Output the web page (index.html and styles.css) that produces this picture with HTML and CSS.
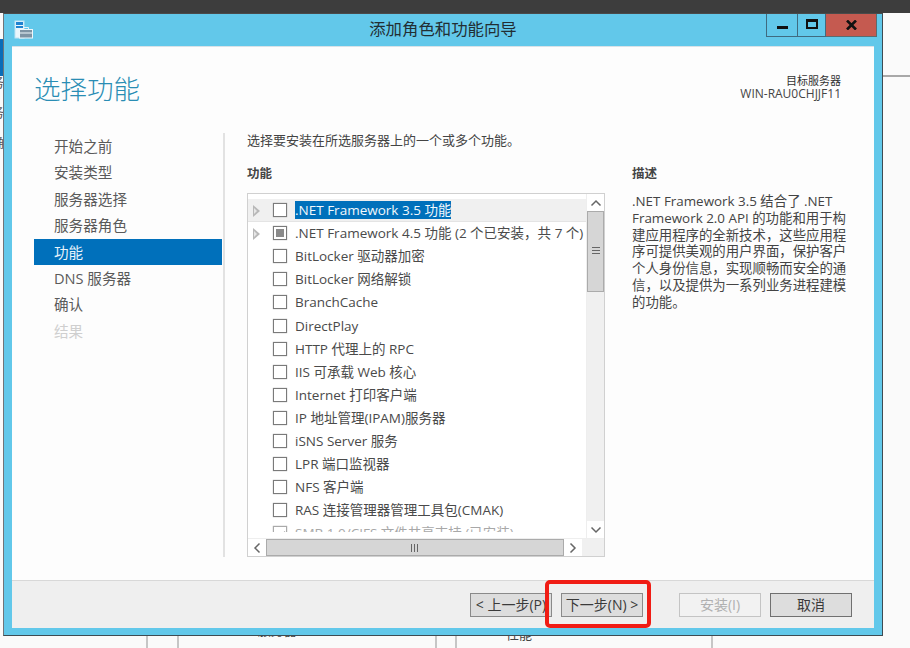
FILE: index.html
```html
<!DOCTYPE html>
<html lang="zh-CN">
<head>
<meta charset="utf-8">
<title>添加角色和功能向导</title>
<link rel="stylesheet" href="styles.css">
</head>
<body>
<div class="topbar"></div>
<div class="desktop">
  <div class="bg-left-block"></div>
  <div class="bg-left-text t1">务</div>
  <div class="bg-left-text t2">务</div>
  <div class="bg-left-text t3">确</div>
  <div class="bg-right-line"></div>
  <div class="bg-v v1"></div><div class="bg-v v2"></div><div class="bg-v v3"></div><div class="bg-v v4"></div><div class="bg-v v5"></div>
  <div class="bg-bottom-text b1">DNS 服务器</div>
  <div class="bg-bottom-text b2">性能</div>

  <section class="window">
    <header class="titlebar">
      <svg class="appicon" width="20" height="20" viewBox="0 0 20 20">
        <rect x="1" y="1" width="9" height="17" fill="#eaf6fc" stroke="#bfe3f3"/>
        <rect x="2" y="2" width="7" height="3" fill="#1f83d0"/>
        <rect x="2" y="6" width="7" height="2" fill="#1f83d0"/>
        <rect x="5.5" y="9.5" width="13" height="8.5" fill="#7d93a3" stroke="#eef7fb"/>
        <path d="M9.500 9.500V7.500H14.500V9.500" fill="none" stroke="#e8f3f8"/>
        <path d="M6 13H18" stroke="#eef7fb"/>
      </svg>
      <h1 class="wintitle">添加角色和功能向导</h1>
      <div class="controls">
        <div class="ctl ctl-min"><span class="glyph-min"></span></div>
        <div class="ctl ctl-max"><span class="glyph-max"></span></div>
        <div class="ctl ctl-close">
          <svg width="11" height="10" viewBox="0 0 11 10"><path d="M1 0.500L10 9.500M10 0.500L1 9.500" stroke="#111" stroke-width="2.600"/></svg>
        </div>
      </div>
    </header>
    <div class="client">
      <div class="pagehead">
        <h2 class="pagetitle">选择功能</h2>
        <div class="server">
          <div class="server-label">目标服务器</div>
          <div>WIN-RAU0CHJJF11</div>
        </div>
      </div>
      <div class="main">
        <nav class="nav">
          <div class="nav-item">开始之前</div>
          <div class="nav-item">安装类型</div>
          <div class="nav-item">服务器选择</div>
          <div class="nav-item">服务器角色</div>
          <div class="nav-item active">功能</div>
          <div class="nav-item">DNS 服务器</div>
          <div class="nav-item">确认</div>
          <div class="nav-item disabled">结果</div>
        </nav>
        <div class="content">
          <p class="intro">选择要安装在所选服务器上的一个或多个功能。</p>
          <div class="columns">
            <div class="features">
              <h3 class="colhead">功能</h3>
              <div class="listbox">
                <div class="listarea">
                  <div class="rows">
                    <div class="row first"><span class="arrow"></span><span class="check"></span><span class="label selected">.NET Framework 3.5 功能</span></div>
                    <div class="row"><span class="arrow"></span><span class="check partial"></span><span class="label">.NET Framework 4.5 功能 (2 个已安装，共 7 个)</span></div>
                    <div class="row"><span class="check"></span><span class="label">BitLocker 驱动器加密</span></div>
                    <div class="row"><span class="check"></span><span class="label">BitLocker 网络解锁</span></div>
                    <div class="row"><span class="check"></span><span class="label">BranchCache</span></div>
                    <div class="row"><span class="check"></span><span class="label">DirectPlay</span></div>
                    <div class="row"><span class="check"></span><span class="label">HTTP 代理上的 RPC</span></div>
                    <div class="row"><span class="check"></span><span class="label">IIS 可承载 Web 核心</span></div>
                    <div class="row"><span class="check"></span><span class="label">Internet 打印客户端</span></div>
                    <div class="row"><span class="check"></span><span class="label">IP 地址管理(IPAM)服务器</span></div>
                    <div class="row"><span class="check"></span><span class="label">iSNS Server 服务</span></div>
                    <div class="row"><span class="check"></span><span class="label">LPR 端口监视器</span></div>
                    <div class="row"><span class="check"></span><span class="label">NFS 客户端</span></div>
                    <div class="row"><span class="check"></span><span class="label">RAS 连接管理器管理工具包(CMAK)</span></div>
                    <div class="row faded"><span class="check checked"></span><span class="label">SMB 1.0/CIFS 文件共享支持 (已安装)</span></div>
                  </div>
                  <div class="vscroll">
                    <div class="sbtn"><svg width="12" height="8" viewBox="0 0 12 8"><path d="M1.500 6.500L6 2L10.500 6.500" fill="none" stroke="#666" stroke-width="1.500"/></svg></div>
                    <div class="vthumb"><span class="grip-h"></span></div>
                    <div class="vtrack"></div>
                    <div class="sbtn"><svg width="12" height="8" viewBox="0 0 12 8"><path d="M1.500 1.500L6 6L10.500 1.500" fill="none" stroke="#666" stroke-width="1.500"/></svg></div>
                  </div>
                </div>
                <div class="hscroll">
                  <div class="sbtn-h"><svg width="8" height="12" viewBox="0 0 8 12"><path d="M6.500 1.500L2 6L6.500 10.500" fill="none" stroke="#666" stroke-width="1.500"/></svg></div>
                  <div class="hthumb"><span class="grip-v"></span></div>
                  <div class="sbtn-h"><svg width="8" height="12" viewBox="0 0 8 12"><path d="M1.500 1.500L6 6L1.500 10.500" fill="none" stroke="#666" stroke-width="1.500"/></svg></div>
                  <div class="corner"></div>
                </div>
              </div>
            </div>
            <aside class="desc">
              <h3 class="colhead">描述</h3>
              <p class="desctext">.NET Framework 3.5 结合了 .NET Framework 2.0 API 的功能和用于构建应用程序的全新技术，这些应用程序可提供美观的用户界面，保护客户个人身份信息，实现顺畅而安全的通信，以及提供为一系列业务进程建模的功能。</p>
            </aside>
          </div>
        </div>
      </div>
      <footer class="footer">
        <button class="btn btn-prev">&lt; 上一步(P)</button>
        <button class="btn btn-next">下一步(N) &gt;</button>
        <button class="btn btn-install" disabled>安装(I)</button>
        <button class="btn btn-cancel">取消</button>
      </footer>
    </div>
  </section>
  <div class="callout"></div>
</div>
</body>
</html>
```
FILE: styles.css
```css
* { box-sizing: border-box; }
html, body { margin: 0; height: 100%; overflow: hidden; }
body {
  background: #fafafa;
  font-family: "Open Sans", "Noto Sans CJK SC", sans-serif;
  color: #444;
}
h1, h2, h3, p { margin: 0; font-weight: normal; }

.topbar { height: 13px; background: #3d3d3d; }
.desktop { position: relative; height: 635px; overflow: hidden; }

.bg-left-block { position: absolute; left: 0; top: 26px; width: 4px; height: 37px; background: #0a6db8; }
.bg-left-text { position: absolute; left: -9px; font-size: 13px; line-height: 16px; color: #555; }
.t1 { top: 61px; }
.t2 { top: 91px; }
.t3 { top: 121px; }
.bg-right-line { position: absolute; left: 883px; top: 62px; width: 27px; height: 2px; background: #a8a8a8; }
.bg-v { position: absolute; top: 620px; width: 2px; height: 15px; background: #c6c6c6; }
.v1 { left: 146px; }
.v2 { left: 177px; }
.v3 { left: 435px; }
.v4 { left: 455px; }
.v5 { left: 711px; }
.bg-bottom-text { position: absolute; font-size: 13px; line-height: 16px; color: #444; }
.b1 { left: 228px; top: 609px; }
.b2 { left: 506px; top: 613px; }

.window {
  position: absolute;
  left: 3px;
  top: 0;
  width: 880px;
  height: 623px;
  display: flex;
  flex-direction: column;
  background: #62c8ea;
  border: 1px solid #3e4b52;
  border-top-color: #4a4a4a;
  border-left-color: #6f7478;
  padding: 0 8px 7px 8px;
}
.titlebar {
  position: relative;
  height: 32px;
  flex: none;
  display: flex;
  align-items: center;
  justify-content: center;
}
.appicon { position: absolute; left: 2px; top: 6px; }
.wintitle { font-size: 16.400px; color: #222e33; line-height: 20px; margin-bottom: 3px; }
.controls {
  position: absolute;
  left: 754px;
  top: 0;
  display: flex;
  height: 23px;
}
.ctl {
  height: 23px;
  display: flex;
  align-items: center;
  justify-content: center;
  border: 1px solid #3f6b80;
  border-top: 0;
}
.ctl-min { width: 32px; }
.ctl-max { width: 28px; border-left: 0; }
.ctl-close { width: 51px; background: #c55a50; border-left: 0; border-color: #5b6b70; }
.glyph-min { width: 11px; height: 3px; background: #111; margin-top: 5px; }
.glyph-max { width: 12px; height: 10px; border: 2px solid #111; border-top-width: 3px; margin-bottom: 3px; }

.client {
  flex: 1;
  min-height: 0;
  display: flex;
  flex-direction: column;
  background: #fdfdfd;
  border-top: 1px solid #d8e2e8;
}
.pagehead {
  height: 86px;
  flex: none;
  display: flex;
  justify-content: space-between;
  padding: 24px 33px 0 22px;
}
.pagetitle {
  font-size: 26.500px;
  line-height: 36px;
  color: #2a8db4;
  font-weight: 300;
}
.server {
  font-size: 12px;
  line-height: 13px;
  text-align: right;
  color: #444;
  padding-top: 3px;
}
.server-label { color: #333; font-size: 11px; }

.main { flex: 1; min-height: 0; display: flex; }
.nav {
  width: 191px;
  flex: none;
  margin-left: 22px;
  height: 424px;
  border-right: 2px solid #e2e2e2;
}
.nav-item {
  height: 26.400px;
  line-height: 26.400px;
  padding-left: 20px;
  width: 188px;
  font-size: 14.600px;
  color: #5a5a5a;
}
.nav-item.active { background: #0070bb; color: #e8f3fb; }
.nav-item.disabled { color: #cfcfcf; }

.content { flex: 1; min-width: 0; padding: 1px 0 0 22px; display: flex; flex-direction: column; }
.intro { font-size: 13px; line-height: 16px; color: #444; margin-top: -2px; }
.columns { display: flex; margin-top: 18px; }
.features { width: 358px; flex: none; }
.colhead { font-size: 12.500px; line-height: 16px; font-weight: 700; color: #444; height: 27px; }
.listbox {
  width: 358px;
  height: 364px;
  border: 1.500px solid #d0d0d0;
  background: #fff;
  display: flex;
  flex-direction: column;
}
.listarea { flex: 1; min-height: 0; display: flex; }
.rows { flex: 1; min-width: 0; height: 338px; align-self: flex-start; overflow: hidden; padding-top: 4.500px; }
.row {
  height: 23.100px;
  display: flex;
  align-items: center;
  padding-left: 25px;
  position: relative;
  font-size: 13.500px;
  color: #4a4a4a;
  white-space: nowrap;
}
.row.first { background: #f0f0f0; box-shadow: inset 0 -1px #e4e4e4; }
.row.faded { color: #a8a8a8; }
.row.faded .check { border-color: #aaa; }
.arrow {
  position: absolute;
  left: 5px;
  top: 6px;
  width: 0;
  height: 0;
  border-left: 7px solid #b8b8b8;
  border-top: 6px solid transparent;
  border-bottom: 6px solid transparent;
}
.arrow::after {
  content: "";
  position: absolute;
  left: -6px;
  top: -3px;
  border-left: 3px solid #e6e6e6;
  border-top: 3px solid transparent;
  border-bottom: 3px solid transparent;
}
.check {
  width: 14px;
  height: 14px;
  flex: none;
  border: 1px solid #7a7a7a;
  box-shadow: 0 0 1px #999;
  background: #fff;
  margin-right: 8px;
  display: flex;
  align-items: center;
  justify-content: center;
}
.check.partial::after { content: ""; width: 8px; height: 8px; background: #8a8a8a; }
.check.checked::after {
  content: "";
  width: 4px;
  height: 8px;
  border: solid #aaa;
  border-width: 0 1.500px 1.500px 0;
  transform: rotate(40deg);
}
.label { line-height: 18px; }
.label.selected { background: #0070bb; color: #f2f8fc; }

.vscroll { width: 18px; flex: none; display: flex; flex-direction: column; background: #f0f0f0; border-left: 1px solid #eee; }
.sbtn { height: 17px; flex: none; background: #fff; display: flex; align-items: center; justify-content: center; }
.vthumb {
  height: 81px;
  flex: none;
  background: #d6d6d6;
  border: 1px solid #ababab;
  display: flex;
  align-items: center;
  justify-content: center;
}
.vtrack { flex: 1; background: #f0f0f0; }
.grip-h { width: 8px; height: 9px; background: repeating-linear-gradient(180deg, #666 0 1px, transparent 1px 3px); }
.hscroll { height: 18px; flex: none; display: flex; background: #f0f0f0; border-top: 1px solid #eee; }
.sbtn-h { width: 18px; flex: none; background: #fff; display: flex; align-items: center; justify-content: center; }
.hthumb {
  width: 298px;
  flex: none;
  background: #d6d6d6;
  border: 1px solid #ababab;
  display: flex;
  align-items: center;
  justify-content: center;
}
.grip-v { width: 9px; height: 8px; background: repeating-linear-gradient(90deg, #666 0 1px, transparent 1px 3px); }
.corner { flex: 1; background: #f0f0f0; }

.desc { margin-left: 27px; width: 218px; }
.desctext { font-size: 13.400px; line-height: 16.800px; color: #444; margin-top: 0; }

.footer {
  height: 48px;
  flex: none;
  display: flex;
  align-items: flex-start;
  padding: 12px 0 0 458px;
  background: #efefef;
  border-top: 1px solid #d8d8d8;
}
.btn {
  height: 24px;
  width: 82px;
  padding: 0;
  font: 14px/20px "Open Sans", "Noto Sans CJK SC", sans-serif;
  color: #3a3a3a;
  background: #dddddd;
  border: 1px solid #8a8a8a;
}
.btn-next { margin-left: 9px; }
.btn-install { margin-left: 36px; background: #f2f2f2; border-color: #c4c4c4; color: #b0b0b0; }
.btn-cancel { margin-left: 9px; border-color: #707070; }

.callout {
  position: absolute;
  left: 545px;
  top: 567px;
  width: 106px;
  height: 48px;
  border: 4px solid #f01c14;
  border-radius: 5px;
}
```
